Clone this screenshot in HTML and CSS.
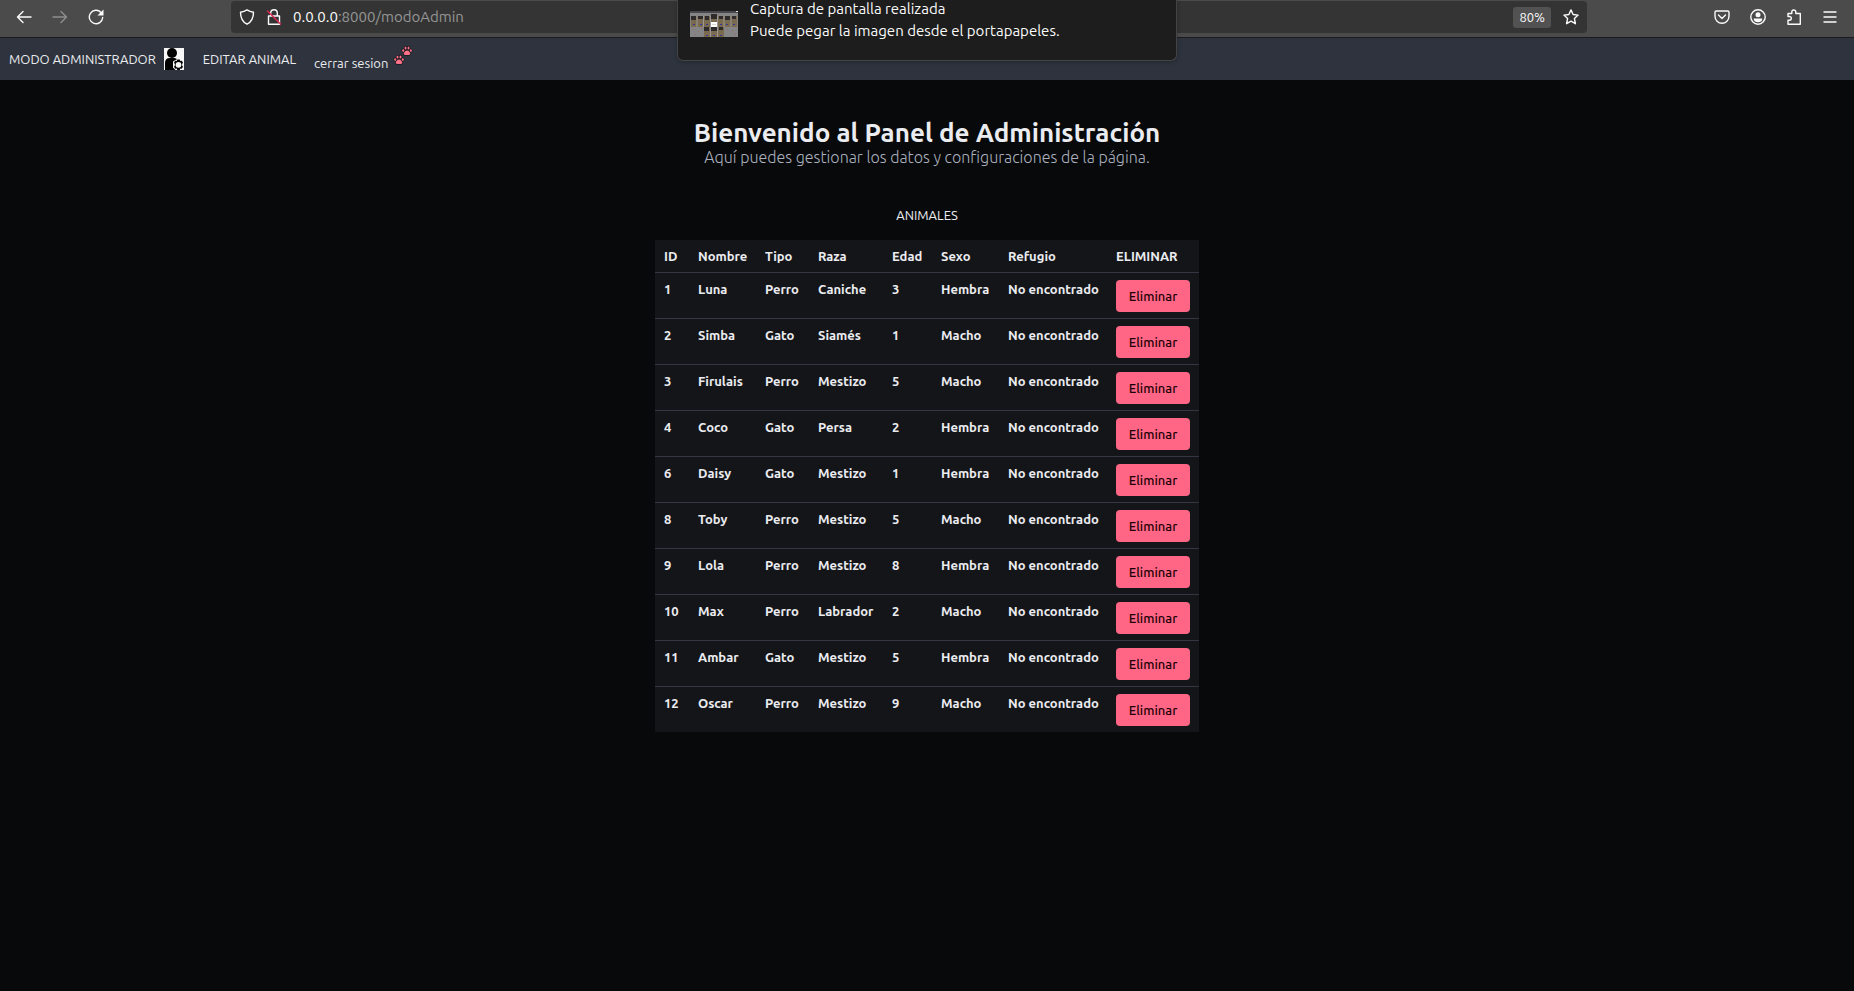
FILE: index.html
```html
<!DOCTYPE html>
<html lang="es">
<head>
<meta charset="utf-8">
<title>Panel de Administración</title>
<link rel="stylesheet" href="styles.css">
</head>
<body>
<header class="browser">
  <div class="history">
    <button class="tool" aria-label="Atrás"><svg viewBox="0 0 16 16"><path d="M15 8H1.500M7 2.500 1.500 8 7 13.500"/></svg></button>
    <button class="tool tool-off" aria-label="Adelante" disabled><svg viewBox="0 0 16 16"><path d="M1 8h13.500M9 2.500 14.500 8 9 13.500"/></svg></button>
    <button class="tool" aria-label="Recargar"><svg viewBox="0 0 16 16"><path d="M13 3.500A6.700 6.700 0 1 0 14.700 8.500"/><path class="solid" d="M15.500.5v6h-6z"/></svg></button>
  </div>
  <div class="address">
    <svg class="mark" viewBox="0 0 16 16"><path d="M8 .9c2 1.400 4.500 2.100 6.500 2.300 0 5.500-1.500 9.500-6.500 12-5-2.500-6.500-6.500-6.500-12C3.500 3 6 2.300 8 .9z"/></svg>
    <svg class="mark" viewBox="0 0 16 16"><path d="M2.500 7h11v8.200h-11zM4.700 7V4a3.300 3.300 0 0 1 6.600 0v3"/><path class="strike" d="m1.500 2 13 13"/></svg>
    <span class="url">0.0.0.0<span class="url-rest">:8000/modoAdmin</span></span>
    <button class="zoom">80%</button>
    <button class="tool" aria-label="Marcador"><svg viewBox="0 0 16 16"><path d="m8 .9 2.100 4.600 5 .6-3.700 3.400 1 5.200L8 12.200l-4.400 2.500 1-5.200L.9 6.100l5-.6z"/></svg></button>
  </div>
  <div class="actions">
    <button class="tool" aria-label="Pocket"><svg viewBox="0 0 16 16"><path d="M2.200 2h11.600q1.200 0 1.200 1.200v4a7 7 0 0 1-14 0v-4Q1 2 2.200 2zM4.500 6 8 9.500 11.500 6"/></svg></button>
    <button class="tool" aria-label="Cuenta"><svg viewBox="0 0 16 16"><circle cx="8" cy="8" r="7.200"/><circle class="solid" cx="8" cy="5.700" r="2.500"/><path class="solid" d="M3.700 9.500h8.600q0 3.800-4.300 3.800T3.700 9.500z"/></svg></button>
    <button class="tool" aria-label="Extensiones"><svg viewBox="0 0 16 16"><path d="M2 15.200h12.300V4.500h-4.500V3a2 2 0 0 0-4 0v1.500H2v3h1.500a1.700 1.700 0 0 1 0 3.700H2z"/></svg></button>
    <button class="tool" aria-label="Menú"><svg viewBox="0 0 16 16"><path d="M2 3h12M2 8h12M2 13h12"/></svg></button>
  </div>
  <aside class="toast">
    <svg class="thumb" viewBox="0 0 48 26">
      <path fill="#858585" d="M0 2h48v24H0z"/><path fill="#48464b" d="M0 0h48v2H0z"/><path fill="#ddd" d="M46 0h2v1h-2z"/>
      <path fill="#796a50" d="M1 5h46v11H1zM14 16h20v10H14z"/>
      <path fill="#302b2b" d="M1 5h5v4H1zM8 5h5v3H8zM15 5h4v4h-4zM21 3h6v5h-6zM29 5h4v3h-4zM35 5h5v4h-5zM42 5h4v3h-4zM14 16h5v4h-5zM21 16h6v4h-6zM29 16h4v3h-4z"/>
      <path stroke="#989898" d="M7 5v11M13.500 5v11M20.500 5v21M27.500 5v21M34 5v11M41 5v11" fill="none"/>
      <path fill="#34369a" d="M3 13h2v1H3zM10 13h2v1h-2zM16 13h2v1h-2zM30 13h2v1h-2zM36 13h2v1h-2zM43 13h2v1h-2zM16 24h2v1h-2zM23 24h2v1h-2zM30 24h2v1h-2z"/>
      <path fill="#9b6268" d="M3 18h1v1H3zM8 20h1v1H8zM11 17h1v1h-1zM37 18h1v1h-1zM42 19h1v1h-1zM45 23h1v1h-1zM5 23h1v1H5z"/>
      <path fill="#fff" d="M21 11h6v5h-6z"/><path fill="#ddd8cc" d="M22 13h4v1h-4z"/>
    </svg>
    <p class="toast-text">Captura de pantalla realizada<br>Puede pegar la imagen desde el portapapeles.</p>
  </aside>
</header>
<nav class="nav">
  <a class="nav-link nav-mode" href="#">MODO ADMINISTRADOR
    <svg class="admin" viewBox="0 0 20 22"><path fill="#f7f7f7" d="M0 0h20v22H0z"/><circle cx="8" cy="5" r="5"/><path d="M1 22V15q0-5 5-5h4q3 0 4 3v9z"/><path fill="#f7f7f7" d="M14.500 10.200 20 13v7l-5.500 2h-3L9 19.500v-6z"/><path d="m13.300 11.500h2.400l.6 1.400 1.500-.2 1.200 2-.9 1.300v1.500l.9 1.300-1.200 2-1.500-.2-.6 1.400h-2.400l-.6-1.400-1.500.2-1.200-2 .9-1.300V16l-.9-1.300 1.200-2 1.500.2z"/><circle cx="14.500" cy="16.800" r="2.900" fill="#f7f7f7"/></svg>
  </a>
  <a class="nav-link nav-edit" href="#">EDITAR ANIMAL</a>
  <a class="nav-link nav-exit" href="#">cerrar sesion
    <svg class="paws" viewBox="0 0 20 20"><defs><g id="paw"><path d="M5 4.500c1.800 0 3.300 2.100 3.300 3.300S7 9.100 5 9.100 1.700 9 1.700 7.800 3.200 4.500 5 4.500z"/><ellipse cx="3.500" cy="2" rx="1" ry="1.500"/><ellipse cx="6.500" cy="2" rx="1" ry="1.500"/><ellipse cx="1.200" cy="4.600" rx="1" ry="1.300"/><ellipse cx="8.800" cy="4.600" rx="1" ry="1.300"/></g></defs><g class="paw-edge"><use href="#paw" x="9"/><use href="#paw" x="1" y="9"/></g><g class="paw-fill"><use href="#paw" x="9"/><use href="#paw" x="1" y="9"/></g></svg>
  </a>
</nav>
<main class="page">
  <h1 class="title">Bienvenido al Panel de Administración</h1>
  <p class="subtitle">Aquí puedes gestionar los datos y configuraciones de la página.</p>
  <h2 class="section" id="animales">ANIMALES</h2>
  <table class="table" aria-labelledby="animales">
    <colgroup><col class="c-id"><col class="c-name"><col class="c-type"><col class="c-breed"><col class="c-age"><col class="c-sex"><col class="c-home"><col class="c-del"></colgroup>
    <thead><tr><th>ID</th><th>Nombre</th><th>Tipo</th><th>Raza</th><th>Edad</th><th>Sexo</th><th>Refugio</th><th>ELIMINAR</th></tr></thead>
    <tbody>
      <tr><td>1</td><td>Luna</td><td>Perro</td><td>Caniche</td><td>3</td><td>Hembra</td><td>No encontrado</td><td><button class="delete">Eliminar</button></td></tr>
      <tr><td>2</td><td>Simba</td><td>Gato</td><td>Siamés</td><td>1</td><td>Macho</td><td>No encontrado</td><td><button class="delete">Eliminar</button></td></tr>
      <tr><td>3</td><td>Firulais</td><td>Perro</td><td>Mestizo</td><td>5</td><td>Macho</td><td>No encontrado</td><td><button class="delete">Eliminar</button></td></tr>
      <tr><td>4</td><td>Coco</td><td>Gato</td><td>Persa</td><td>2</td><td>Hembra</td><td>No encontrado</td><td><button class="delete">Eliminar</button></td></tr>
      <tr><td>6</td><td>Daisy</td><td>Gato</td><td>Mestizo</td><td>1</td><td>Hembra</td><td>No encontrado</td><td><button class="delete">Eliminar</button></td></tr>
      <tr><td>8</td><td>Toby</td><td>Perro</td><td>Mestizo</td><td>5</td><td>Macho</td><td>No encontrado</td><td><button class="delete">Eliminar</button></td></tr>
      <tr><td>9</td><td>Lola</td><td>Perro</td><td>Mestizo</td><td>8</td><td>Hembra</td><td>No encontrado</td><td><button class="delete">Eliminar</button></td></tr>
      <tr><td>10</td><td>Max</td><td>Perro</td><td>Labrador</td><td>2</td><td>Macho</td><td>No encontrado</td><td><button class="delete">Eliminar</button></td></tr>
      <tr><td>11</td><td>Ambar</td><td>Gato</td><td>Mestizo</td><td>5</td><td>Hembra</td><td>No encontrado</td><td><button class="delete">Eliminar</button></td></tr>
      <tr><td>12</td><td>Oscar</td><td>Perro</td><td>Mestizo</td><td>9</td><td>Macho</td><td>No encontrado</td><td><button class="delete">Eliminar</button></td></tr>
    </tbody>
  </table>
</main>
</body>
</html>
```
FILE: styles.css
```css
* { box-sizing: border-box; }
body {
  margin: 0;
  min-height: 100vh;
  background: #08090b;
  color: #ebecf0;
  font: 13px/20px Ubuntu, "Noto Sans", sans-serif;
}
h1, h2, p { margin: 0; }
button { padding: 0; border: 0; background: none; color: inherit; font: inherit; }

.browser {
  position: relative;
  display: flex;
  align-items: flex-start;
  height: 38px;
  padding: 1px 16px 0;
  background: #4b4b4b;
  border-bottom: 1px solid #1b1b1e;
  color: #fbfbfb;
}
.history { display: flex; gap: 20px; width: 215px; padding-top: 8px; }
.actions { display: flex; gap: 20px; margin-left: auto; padding-top: 8px; }
.tool { width: 16px; height: 16px; }
.tool svg, .mark { display: block; width: 16px; height: 16px; fill: none; stroke: currentColor; stroke-width: 1.400; stroke-linejoin: round; stroke-linecap: round; }
.tool .solid { fill: currentColor; stroke: none; }
.tool-off { color: #8e8e8e; }
.strike { stroke: #e22850; }
.address {
  display: flex;
  align-items: center;
  flex: 0 1 1356px;
  height: 32px;
  padding: 0 8px;
  border-radius: 4px;
  background: #343434;
}
.mark { margin-right: 11px; }
.url { font-size: 15px; }
.url-rest { color: #969696; }
.zoom { margin: 0 12px 0 auto; padding: 0 6px; height: 21px; border-radius: 3px; background: #525252; }

.toast {
  position: absolute;
  z-index: 1;
  top: 0;
  left: calc(50% - 250px);
  display: flex;
  width: 500px;
  height: 61px;
  padding: 0 12px;
  border: 1px solid #444;
  border-top: 0;
  border-radius: 0 0 6px 6px;
  background: #1d1d1d;
  box-shadow: 0 1px 4px #0004;
}
.thumb { width: 48px; height: 26px; margin: 11px 12px 0 0; }
.toast-text { margin-top: -2px; font-size: 15px; line-height: 22px; }

.nav { display: flex; align-items: center; height: 42px; padding: 0 9px; background: #2e333d; }
.nav-link { display: flex; align-items: center; color: #ebecf0; text-decoration: none; }
.nav-mode { gap: 8px; }
.nav-edit { margin-left: 19px; }
.nav-exit { gap: 5px; margin-left: 18px; padding-top: 7px; }
.admin { width: 20px; height: 22px; }
.paws { width: 20px; height: 20px; margin-top: -14px; overflow: visible; }
.paw-edge { fill: #15171c; stroke: #15171c; stroke-width: 1.400; }
.paw-fill { fill: #ff7187; }

.page { display: flex; flex-direction: column; align-items: center; padding-top: 39px; }
.title { font-size: 26px; font-weight: 700; line-height: 28px; }
.subtitle { color: #abb1bf; font-size: 16px; font-weight: 300; line-height: 20px; }
.section { margin: 38px 0 15px; font-size: 13px; font-weight: 400; }

.table { width: 544px; table-layout: fixed; border-spacing: 0; background: #141519; font-weight: 600; }
.c-id { width: 34px; }
.c-name { width: 67px; }
.c-type { width: 53px; }
.c-breed { width: 74px; }
.c-age { width: 49px; }
.c-sex { width: 67px; }
.c-home { width: 108px; }
.c-del { width: 92px; }
.table th, .table td { padding: 6px 9px; border-bottom: 1px solid #343743; text-align: left; vertical-align: top; white-space: nowrap; }
.table th { font-weight: 600; }
.table tbody tr:last-child td { border-bottom: 0; }
.delete { display: block; width: 74px; height: 32px; margin-top: 1px; border-radius: 4px; background: #ff6685; color: #1a0005; font-weight: 500; }
```
